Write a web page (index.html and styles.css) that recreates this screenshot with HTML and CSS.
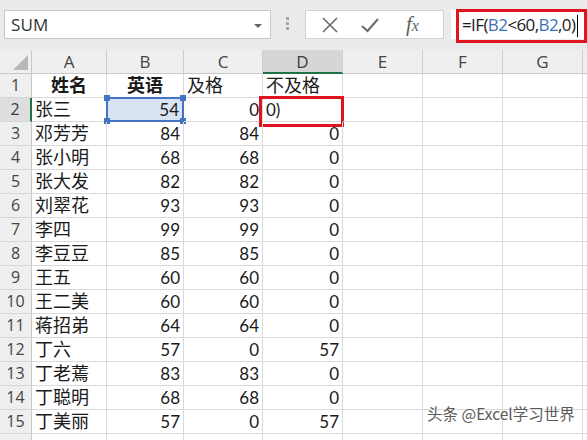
FILE: index.html
```html
<!DOCTYPE html>
<html>
<head>
<meta charset="utf-8">
<link rel="stylesheet" href="styles.css">
</head>
<body>
<div class="app">
  <div class="fbar">
    <div class="namebox"><span class="nm">SUM</span><span class="caret"></span></div>
    <div class="grip"><i></i><i></i><i></i></div>
    <div class="fnbox">
      <svg class="ico" width="20" height="20" viewBox="0 0 20 20"><path d="M3 3 L17 17 M17 3 L3 17" stroke="#6b6b6b" stroke-width="1.6" fill="none"/></svg>
      <svg class="ico" width="20" height="20" viewBox="0 0 20 20"><path d="M2 11 L7.5 16 L18 4" stroke="#6b6b6b" stroke-width="2" fill="none"/></svg>
      <span class="fx">f<span class="fxx">x</span></span>
    </div>
    <div class="formula">=IF(<span class="ref">B2</span>&lt;60,<span class="ref">B2</span>,0)<span class="cur"></span></div>
    <div class="redbox top"></div>
  </div>
  <div class="sheet">
    <div class="corner"><span class="tri"></span></div>
    <div class="ch">A</div><div class="ch">B</div><div class="ch">C</div><div class="ch sel">D</div><div class="ch">E</div><div class="ch">F</div><div class="ch">G</div><div class="ch"></div>

    <div class="rh">1</div><div class="c ctr b">姓名</div><div class="c ctr b">英语</div><div class="c">及格</div><div class="c">不及格</div><div class="c"></div><div class="c"></div><div class="c"></div><div class="c"></div>
    <div class="rh sel">2</div><div class="c">张三</div><div class="c r hl">54<i class="h h1"></i><i class="h h2"></i><i class="h h3"></i><i class="h h4"></i></div><div class="c r">0</div><div class="c edit">0)<div class="redbox cell"></div></div><div class="c"></div><div class="c"></div><div class="c"></div><div class="c"></div>
    <div class="rh">3</div><div class="c">邓芳芳</div><div class="c r">84</div><div class="c r">84</div><div class="c r">0</div><div class="c"></div><div class="c"></div><div class="c"></div><div class="c"></div>
    <div class="rh">4</div><div class="c">张小明</div><div class="c r">68</div><div class="c r">68</div><div class="c r">0</div><div class="c"></div><div class="c"></div><div class="c"></div><div class="c"></div>
    <div class="rh">5</div><div class="c">张大发</div><div class="c r">82</div><div class="c r">82</div><div class="c r">0</div><div class="c"></div><div class="c"></div><div class="c"></div><div class="c"></div>
    <div class="rh">6</div><div class="c">刘翠花</div><div class="c r">93</div><div class="c r">93</div><div class="c r">0</div><div class="c"></div><div class="c"></div><div class="c"></div><div class="c"></div>
    <div class="rh">7</div><div class="c">李四</div><div class="c r">99</div><div class="c r">99</div><div class="c r">0</div><div class="c"></div><div class="c"></div><div class="c"></div><div class="c"></div>
    <div class="rh">8</div><div class="c">李豆豆</div><div class="c r">85</div><div class="c r">85</div><div class="c r">0</div><div class="c"></div><div class="c"></div><div class="c"></div><div class="c"></div>
    <div class="rh">9</div><div class="c">王五</div><div class="c r">60</div><div class="c r">60</div><div class="c r">0</div><div class="c"></div><div class="c"></div><div class="c"></div><div class="c"></div>
    <div class="rh">10</div><div class="c">王二美</div><div class="c r">60</div><div class="c r">60</div><div class="c r">0</div><div class="c"></div><div class="c"></div><div class="c"></div><div class="c"></div>
    <div class="rh">11</div><div class="c">蒋招弟</div><div class="c r">64</div><div class="c r">64</div><div class="c r">0</div><div class="c"></div><div class="c"></div><div class="c"></div><div class="c"></div>
    <div class="rh">12</div><div class="c">丁六</div><div class="c r">57</div><div class="c r">0</div><div class="c r">57</div><div class="c"></div><div class="c"></div><div class="c"></div><div class="c"></div>
    <div class="rh">13</div><div class="c">丁老蔫</div><div class="c r">83</div><div class="c r">83</div><div class="c r">0</div><div class="c"></div><div class="c"></div><div class="c"></div><div class="c"></div>
    <div class="rh">14</div><div class="c">丁聪明</div><div class="c r">68</div><div class="c r">68</div><div class="c r">0</div><div class="c"></div><div class="c"></div><div class="c"></div><div class="c"></div>
    <div class="rh">15</div><div class="c">丁美丽</div><div class="c r">57</div><div class="c r">0</div><div class="c r">57</div><div class="c"></div><div class="c"></div><div class="c"></div><div class="c"></div>
    <div class="rh"></div><div class="c"></div><div class="c"></div><div class="c"></div><div class="c"></div><div class="c"></div><div class="c"></div><div class="c"></div><div class="c"></div>
  </div>
  <div class="wm">头条 @Excel学习世界</div>
</div>
</body>
</html>
```
FILE: styles.css
```css
* { box-sizing: border-box; }
html, body { margin: 0; padding: 0; }
body { width: 587px; height: 440px; overflow: hidden; background: #fff;
  font-family: Lato, "Noto Sans CJK SC", sans-serif; color: #1a1a1a; }
.app { position: relative; width: 587px; height: 440px; overflow: hidden; }

.fbar { position: relative; height: 50px; background: #ebebeb; display: flex; align-items: flex-start; padding-top: 10px; }
.namebox { margin-left: 4px; width: 267px; height: 29px; background: #fff; border: 1px solid #c6c6c6;
  display: flex; align-items: center; justify-content: space-between; padding: 0 8px 0 6px; }
.nm { font-size: 17px; color: #333; font-family: "Open Sans", sans-serif; letter-spacing: 0.2px; }
.caret { width: 0; height: 0; border-left: 4px solid transparent; border-right: 4px solid transparent; border-top: 4px solid #666; margin-top: 2px; }
.grip { width: 3px; margin: 7px 16px 0 15px; display: flex; flex-direction: column; gap: 2px; }
.grip i { display: block; width: 3px; height: 3px; background: #a8a8a8; }
.fnbox { width: 139px; height: 29px; background: #fff; border: 1px solid #d2d2d2; display: flex; align-items: center;
  padding-left: 14px; gap: 20px; }
.ico { display: block; }
.fx { font-family: "Liberation Serif", serif; font-style: italic; font-size: 21px; color: #5f5f5f; margin-left: 6px; }
.fxx { font-size: 16px; }
.formula { margin-left: 7px; flex: 1; height: 29px; background: #fff; font-size: 17px; line-height: 29px; padding-left: 11px;
  color: #1a1a1a; font-family: "Open Sans", sans-serif; letter-spacing: -0.6px; white-space: nowrap; }
.ref { color: #3b6fb6; }
.cur { display: inline-block; width: 1px; height: 22px; background: #000; vertical-align: middle; margin-left: 2px; }
.redbox { position: absolute; border: 3.5px solid #e0141e; pointer-events: none; }
.redbox.top { left: 456px; top: 9px; width: 131px; height: 34px; }

.sheet { display: grid; grid-template-columns: 32px 75px 77px 79px 80px 80px 80px 80px 20px;
  grid-auto-rows: 24px; grid-template-rows: 24px; }
.corner { background: #efefef; border-right: 1px solid #c8c8c8; border-bottom: 1px solid #c8c8c8; position: relative; }
.tri { position: absolute; right: 3px; bottom: 3px; width: 0; height: 0; border-left: 15px solid transparent; border-bottom: 15px solid #b8b8b8; }
.ch { background: #efefef; border-right: 1px solid #cfcfcf; border-bottom: 1px solid #c8c8c8; text-align: center;
  font-family: "Open Sans", sans-serif; font-size: 17px; line-height: 24px; color: #444; }
.ch.sel { background: #d6d6d6; border-bottom: 2px solid #217346; color: #3a3a3a; }
.rh { background: #efefef; border-right: 1px solid #c8c8c8; border-bottom: 1px solid #d6d6d6; text-align: center;
  font-family: "Open Sans", sans-serif; font-size: 16px; line-height: 23px; color: #444; }
.rh.sel { background: #dedede; border-right: 2px solid #217346; color: #3a3a3a; }
.c { border-right: 1px solid #d9d9d9; border-bottom: 1px solid #d9d9d9; font-size: 18px; line-height: 23px;
  padding: 0 3px; white-space: nowrap; position: relative; }
.c.r { text-align: right; font-size: 17px; }
.c.ctr { text-align: center; }
.c.b { font-weight: bold; }
.c.hl { background: #d9e3f3; border: 2px solid #4472c4; margin: -1px 0 0 -1px; line-height: 20px; padding-top: 1px; }
.c.edit { font-size: 17px; overflow: visible; }
.h { position: absolute; width: 6px; height: 6px; background: #4472c4; }
.h1 { left: -4px; top: -4px; } .h2 { right: -4px; top: -4px; } .h3 { left: -4px; bottom: -4px; } .h4 { right: -4px; bottom: -4px; }
.redbox.cell { left: -4px; top: -2px; width: 85px; height: 31px; }

.wm { position: absolute; left: 427px; top: 402px; font-size: 15.5px; color: #5a5a5a; font-family: "Noto Sans CJK SC", sans-serif;
  line-height: 22px; text-shadow: 0 0 2px #fff; }
```
